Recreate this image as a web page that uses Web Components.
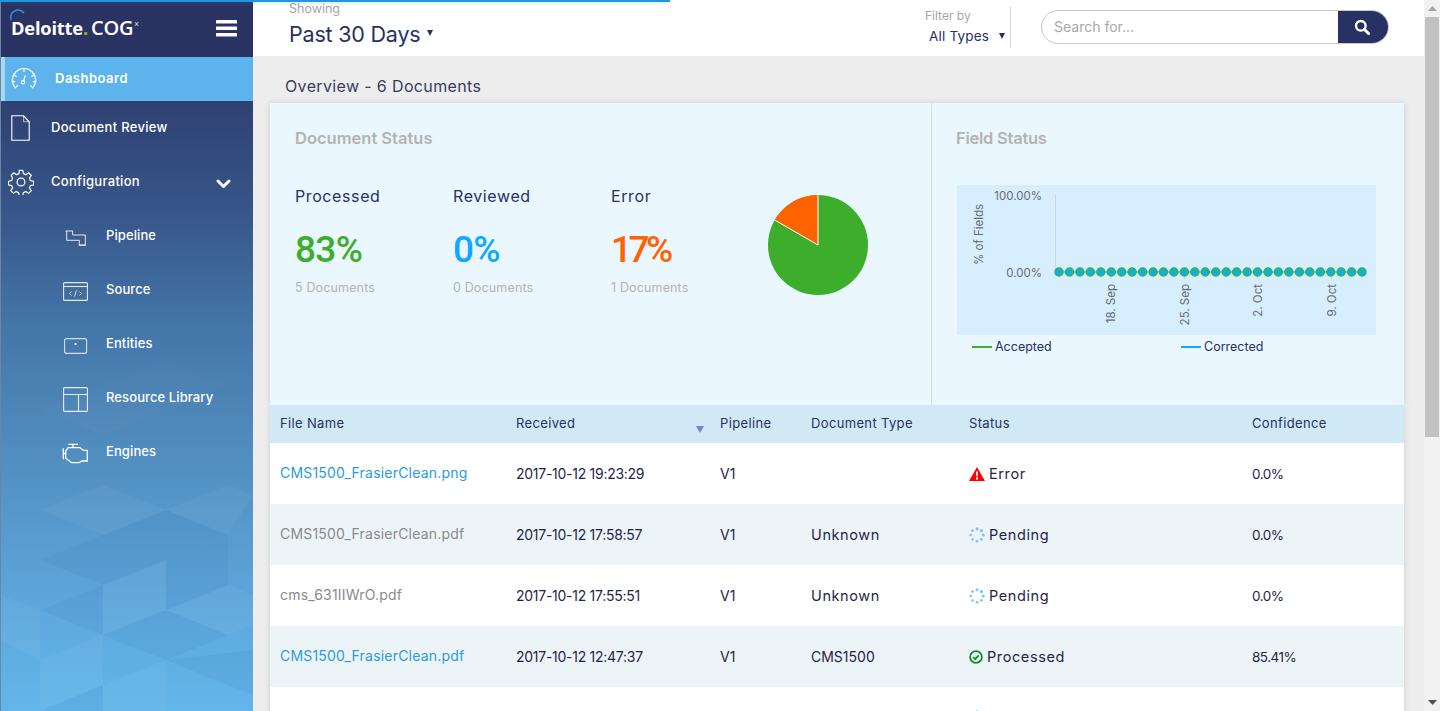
<!DOCTYPE html>
<html lang="en"><head><meta charset="utf-8"><title>Deloitte COGx</title>
<style>
html,body{margin:0;height:100%;overflow:hidden;background:#ededed}
body{font-family:Inter,"Noto Sans",sans-serif;color:#283163}
app-shell{height:711px}
</style></head><body>
<app-shell>
  <side-bar slot="side"></side-bar>
  <top-bar slot="top"></top-bar>
  <over-view slot="main"></over-view>
  <doc-table slot="main"></doc-table>
  <scroll-track slot="scroll"></scroll-track>
</app-shell>
<script>
const F='Inter,"Noto Sans",sans-serif';
function def(name,html,init){
  customElements.define(name,class extends HTMLElement{
    constructor(){super();this.attachShadow({mode:'open'}).innerHTML=typeof html==='function'?html(this):html;}
    connectedCallback(){if(init)init.call(this,this.shadowRoot);}
  });
}
def('app-shell',`<style>
:host{display:flex;position:relative;width:1440px;overflow:hidden}
.col{flex:1;min-width:0;display:flex;flex-direction:column;height:100%;overflow:hidden}
.body{flex:1;padding:0 20px 0 17px;display:flex;flex-direction:column;overflow:hidden}
.load{position:absolute;left:0;top:0;width:670px;height:2px;background:#2096e0;box-shadow:0 1px 4px rgba(32,150,224,.3);z-index:5}
</style><div class="load"></div><slot name="side"></slot><div class="col"><slot name="top"></slot><div class="body"><slot name="main"></slot></div></div><slot name="scroll"></slot>`);

const icons={
 dash:`<svg width="26" height="24" viewBox="0 0 28 26" fill="none" stroke="#fff" stroke-width="1.300" stroke-linecap="round"><path d="M4.500 22.500A12.600 12.600 0 1 1 23.500 22.500"/><path d="M14 2.500v2.400M3.600 9l2 1.200M24.400 9l-2 1.200M1.600 16h2.400M24 16h2.400M5.500 21.500l1.600-1.200M22.500 21.500l-1.600-1.200"/><circle cx="13" cy="16.500" r="1.800"/><path d="M13.600 15l1.600-5.500"/></svg>`,
 doc:`<svg width="19" height="26" viewBox="0 0 19 26" fill="none" stroke="#fff" stroke-width="1.100"><path d="M.8.8h11.800l5.600 6v18.400H.8z"/><path d="M12.600 .8v6h5.600" stroke-opacity=".6"/></svg>`,
 gear:`<svg width="26" height="26" viewBox="0 0 24 24" fill="none" stroke="#fff" stroke-width="1.100" stroke-linejoin="round"><circle cx="12" cy="12" r="3.600"/><path d="M10.300 1.300h3.400l.5 3a7.600 7.600 0 0 1 2.300 1l2.500-1.800 2.500 2.500-1.800 2.500a7.600 7.600 0 0 1 1 2.300l3 .5v3.400l-3 .5a7.600 7.600 0 0 1-1 2.300l1.800 2.500-2.500 2.500-2.500-1.800a7.600 7.600 0 0 1-2.300 1l-.5 3h-3.400l-.5-3a7.600 7.600 0 0 1-2.300-1l-2.500 1.800-2.500-2.500 1.800-2.500a7.600 7.600 0 0 1-1-2.300l-3-.5v-3.400l3-.5a7.600 7.600 0 0 1 1-2.300L2.900 6l2.500-2.500 2.500 1.800a7.600 7.600 0 0 1 2.300-1z"/></svg>`,
 pipe:`<svg width="24" height="18" viewBox="0 0 24 18" fill="none" stroke="#fff" stroke-opacity=".85" stroke-width="1"><path d="M2.700 2v9.300h12.600V16h6V6H8.700V2"/><path d="M1.500 2h7.500M14.800 16.300h7" stroke-width="1.100"/></svg>`,
 src:`<svg width="25" height="19" viewBox="0 0 25 19" fill="none" stroke="#fff" stroke-opacity=".85" stroke-width="1.100"><rect x=".6" y=".6" width="23.800" height="17.800" rx="1"/><path d="M.6 4.500h23.800"/><path d="M8.500 9.500l-2 2 2 2M16.500 9.500l2 2-2 2M13.500 8.500l-2 6" stroke-width=".9"/></svg>`,
 ent:`<svg width="24" height="16" viewBox="0 0 24 16" fill="none" stroke="#fff" stroke-opacity=".75" stroke-width="1.100"><rect x=".6" y=".6" width="22" height="14.800" rx="2"/><circle cx="11.600" cy="6" r="1.100" fill="#fff" stroke="none"/></svg>`,
 lib:`<svg width="25" height="25" viewBox="0 0 25 25" fill="none" stroke="#fff" stroke-opacity=".85" stroke-width="1.100"><rect x=".6" y=".6" width="23.800" height="23.800" rx="1"/><path d="M.6 7.500h23.800M15.500 7.500v16.900"/></svg>`,
 eng:`<svg width="27" height="21" viewBox="0 0 27 21" fill="none" stroke="#fff" stroke-width="1.300" stroke-linejoin="round"><path d="M1.300 5.300v11M1.300 10.500h2.400"/><path d="M6.300 4.700H18l3.300 2.600h4V18h-5.600L17 19.700H9.700L3.700 15.300V8z"/><path d="M6.300 1.300H16M11 1.300v3.400"/></svg>`,
 chev:`<svg width="15" height="10" viewBox="0 0 15 10" fill="none" stroke="#fff" stroke-width="3" stroke-linecap="round" stroke-linejoin="round"><path d="M2 2l5.500 5.500L13 2"/></svg>`
};

def('nav-item',h=>{
 const sub=h.hasAttribute('sub'),act=h.hasAttribute('active');
 return `<style>
 :host{display:flex;align-items:center;height:${act?44:54}px;position:relative;font:500 13px ${F};color:#fff;letter-spacing:${sub?.1:act?.5:.3}px;${act?'background:#5db3ec;border-left:4px solid #a8d8f0;box-sizing:border-box;font-weight:600;':''}}
 .ic{width:${sub?105:50}px;padding-left:${sub?h.getAttribute('ix')||64:act?6:h.getAttribute('ix')||8}px;box-sizing:border-box;display:flex;align-items:center;flex:none;${sub?'margin-top:3px;':''}}
 .ic svg{display:block}
 .t{white-space:nowrap;margin-top:-2px}
 .c{position:absolute;left:215px;top:21px}
 </style><span class="ic">${icons[h.getAttribute('icon')]}</span><span class="t"><slot></slot></span>${h.hasAttribute('open')?`<span class="c">${icons.chev}</span>`:''}`;
});

def('side-bar',`<style>
:host{display:block;width:253px;flex:none;height:711px;position:relative;overflow:hidden;background:linear-gradient(180deg,#2a3363 0,#2e3f70 13%,#38568a 30%,#4476a8 46%,#5390c2 66%,#5ea8dc 86%,#63b6ea 100%);border-left:1px solid #6e83a8;box-sizing:border-box}
.pat{position:absolute;left:-1px;top:0}
.logo{height:57px;display:flex;align-items:center;justify-content:space-between;padding:0 16px 0 10px;background:#2b3363;position:relative;color:#fff}
.brand{display:flex;align-items:baseline;white-space:nowrap;font:700 18.300px "Open Sans",sans-serif;letter-spacing:-.2px;margin-top:-2px}
.brand i{font-style:normal;color:#86bc25}
.brand b{font-weight:600;font-size:20px;margin-left:3px;letter-spacing:-.1px}
.brand sup{font-size:8px;font-weight:400;align-self:flex-start;margin:0 0 0 1px;line-height:18px;color:#dfe3ee}
.arc{position:absolute;left:9px;top:9px}
.burger{display:block}
</style>
<svg class="pat" width="253" height="711" viewBox="0 0 253 711" fill="#fff">
 <g fill="#2f6ca8" opacity=".09"><polygon points="40,560 103,535 166,510 228,535 166,560 103,585"/><polygon points="166,560 228,535 228,585 166,610"/><polygon points="103,635 166,610 228,635 166,660 "/><polygon points="40,610 103,585 103,635"/><polygon points="103,685 103,711 40,711"/><polygon points="166,660 228,685 253,675 253,650"/><polygon points="228,685 253,675 253,695"/></g>
 <g opacity=".035"><polygon points="103,585 166,560 166,610 103,635"/><polygon points="40,660 103,635 103,685 40,711"/><polygon points="103,685 166,660 166,711 103,711"/><polygon points="228,585 253,595 253,625 228,635"/><polygon points="40,510 103,485 166,510 103,535"/><polygon points="166,610 228,585 228,635"/><polygon points="0,595 40,610 40,660 0,640"/><polygon points="166,510 228,485 253,495 228,535"/></g>
 <g opacity=".018"><polygon points="40,410 103,385 166,360 228,385 166,410 103,435 "/></g>
</svg>
<div class="logo"><div class="brand">Deloitte<i>.</i><b>COG</b><sup>x</sup></div>
 <svg class="arc" width="16" height="14" viewBox="0 0 16 14" fill="none" stroke="#2c8fd8" stroke-width="1.800"><path d="M1 11A7.500 7.500 0 0 1 14 4"/></svg>
 <svg class="burger" width="21" height="17" viewBox="0 0 21 17" fill="#fff"><rect width="21" height="3.500" rx=".6"/><rect y="6.500" width="21" height="3.500" rx=".6"/><rect y="13" width="21" height="3.500" rx=".6"/></svg>
</div>
<div class="groups">
<nav-item icon="dash" active>Dashboard</nav-item>
<nav-item icon="doc" ix="10">Document Review</nav-item>
<nav-item icon="gear" ix="7" open>Configuration</nav-item>
<nav-item icon="pipe" sub ix="63">Pipeline</nav-item>
<nav-item icon="src" sub ix="62">Source</nav-item>
<nav-item icon="ent" sub ix="63">Entities</nav-item>
<nav-item icon="lib" sub ix="62">Resource Library</nav-item>
<nav-item icon="eng" sub ix="61">Engines</nav-item>
</div>`);

const caret=(w,h,c)=>`display:inline-block;width:0;height:0;border-left:${w}px solid transparent;border-right:${w}px solid transparent;border-top:${h}px solid ${c}`;
def('top-bar',`<style>
:host{display:flex;height:56px;background:#fff;flex:none;position:relative;font-family:${F};align-items:stretch}
.show{margin-left:36px;display:flex;flex-direction:column;width:636px;flex:none}
.lbl{font-size:12.500px;color:#a5a5a5;line-height:16px;margin-top:1px}
.val{font-size:21.500px;line-height:30px;margin-top:2px;color:#283163;white-space:nowrap;letter-spacing:-.2px;display:flex;align-items:center}
.val i{${caret(3,6,'#283163')};margin-left:7px;margin-top:-2px}
.filter{width:85px;flex:none;border-right:1px solid #d4d4d4;margin:7px 0 8px;position:relative}
.filter .l{font-size:12px;color:#a5a5a5;line-height:16px;margin-top:1px}
.filter .v{font-size:13.500px;line-height:18px;margin:3px 0 0 4px;color:#283163;white-space:nowrap;letter-spacing:.2px;display:flex;align-items:center}
.filter .v i{${caret(3,6,'#283163')};margin-left:10px}
.search{margin:10px 0 0 30px;width:348px;height:34px;box-sizing:border-box;border:1px solid #c9c9c9;border-radius:17px;display:flex;position:relative;overflow:hidden}
.search .ph{flex:1;font-size:14px;color:#a8a8a8;line-height:32px;padding-left:12px}
.search .btn{width:51px;margin:-1px;background:#283163;display:flex;align-items:center;justify-content:center;padding-right:4px;box-sizing:border-box}
</style>
<div class="show"><div class="lbl">Showing</div><div class="val">Past 30 Days<i></i></div></div>
<div class="filter"><div class="l">Filter by</div><div class="v">All Types<i></i></div></div>
<div class="search"><div class="ph">Search for...</div><div class="btn"><svg width="16" height="16" viewBox="0 0 16 16" fill="none" stroke="#fff"><circle cx="6.800" cy="6.800" r="4.800" stroke-width="2.400"/><path d="M10.500 10.500L14.500 14.500" stroke-width="3" stroke-linecap="round"/></svg></div></div>`);

def('stat-block',h=>`<style>
:host{display:block;width:158px;font-family:${F}}
.a{font-size:16px;line-height:20px;color:#283163;letter-spacing:.6px}
.b{font:500 37px/40px Roboto,sans-serif;margin-top:24px;color:${h.getAttribute('color')};letter-spacing:${h.getAttribute('ls')||'-.7'}px}
.c{font-size:12.500px;line-height:16px;margin-top:10px;color:#b4b4b4;white-space:nowrap;letter-spacing:.15px}
</style><div class="a">${h.getAttribute('label')}</div><div class="b">${h.getAttribute('pct')}</div><div class="c">${h.getAttribute('docs')}</div>`);

let dots='';for(let i=0;i<30;i++){const x=102+i*10.45;dots+=`<circle cx="${x.toFixed(1)}" cy="87" r="4.100" fill="#10b0dc" stroke="#3dae2b" stroke-width="1.100"/>`;}
const ticks=[[153,'18. Sep'],[227,'25. Sep'],[300,'2. Oct'],[374,'9. Oct']];
let tk=ticks.map(([x,t])=>`<path d="M${x+.5} 88v6" stroke="#c9d6df"/><text transform="translate(${x+5} 99) rotate(-90)" text-anchor="end" class="t">${t}</text>`).join('');

def('over-view',`<style>
:host{display:block;font-family:${F};flex:none}
.h{font-size:16px;line-height:20px;padding:20px 0 0 15px;height:27px;color:#373d5e;letter-spacing:.36px}
.card{display:flex;height:302px;background:#eaf7ff;box-shadow:0 0 6px rgba(0,0,0,.14);clip-path:inset(-10px -10px 0 -10px)}
.l{width:662px;flex:none;border-right:1px solid #d5dde3;padding:0 0 0 25px;box-sizing:border-box}
.r{flex:1;padding:0 0 0 24px}
h3{margin:0;font-size:16.500px;font-weight:600;color:#b3b3b3;line-height:20px;padding-top:25px;white-space:nowrap}
.r h3{letter-spacing:-.25px}
.stats{display:flex;align-items:flex-start;margin-top:38px;position:relative}
.pie{position:absolute;left:473px;top:9px}
.chart{margin:37px 0 0 1px;width:419px;height:150px;background:#d6eefd;display:block}
.t{font:400 11.500px ${F};fill:#666c75}
.leg{display:flex;margin:4px 0 0 16px;font-size:12.500px;line-height:16px;color:#283163}
.leg span{display:flex;align-items:center;width:209px;white-space:nowrap}
.leg i{display:block;width:20px;height:2px;margin-right:3px}
</style>
<div class="h">Overview - 6 Documents</div>
<div class="card"><div class="l"><h3>Document Status</h3><div class="stats">
<stat-block label="Processed" pct="83%" docs="5 Documents" color="#3dae2b"></stat-block>
<stat-block label="Reviewed" pct="0%" docs="0 Documents" color="#0fa9ff"></stat-block>
<stat-block label="Error" pct="17%" docs="1 Documents" color="#ff6200" ls="-3.500"></stat-block>
<svg class="pie" width="100" height="100" viewBox="0 0 100 100"><circle cx="50" cy="50" r="50" fill="#3dae2b"/><path d="M50 50V0A50 50 0 0 0 6.700 25z" fill="#ff6200"/><path d="M50 0V50L6.700 25" fill="none" stroke="#fff" stroke-width="1"/></svg>
</div></div>
<div class="r"><h3>Field Status</h3>
<svg class="chart" width="419" height="150" viewBox="0 0 419 150">
<path d="M98.500 10V87" stroke="#c9d6df"/><path d="M98 87H405" stroke="#12b0d8" stroke-width="1"/>
<text class="t" x="85" y="15" text-anchor="end">100.00%</text><text class="t" x="85" y="92" text-anchor="end">0.00%</text>
<text class="t" transform="translate(26 80) rotate(-90)">% of Fields</text>
${tk}${dots}</svg>
<div class="leg"><span><i style="background:#3dae2b"></i>Accepted</span><span><i style="background:#0fa9ff"></i>Corrected</span></div>
</div></div>`);

const spin=`<svg width="16" height="16" viewBox="0 0 16 16" fill="#7cc4f2">${[0,45,90,135,180,225,270,315].map((a,i)=>{const r=a*Math.PI/180;const x=8+6.300*Math.sin(r),y=8-6.300*Math.cos(r);const rr=[1.500,1.600,1.500,1.400,1.300,1.300,1.300,1.400][i];return `<circle cx="${x.toFixed(2)}" cy="${y.toFixed(2)}" r="${rr}"/>`;}).join('')}</svg>`;
const st={
 Error:`<svg width="16" height="14" viewBox="0 0 16 14"><path d="M8 0L16 14H0z" fill="#f00"/><path d="M7 4.500h2l-.3 5h-1.400zM7 10.500h2v2H7z" fill="#fff"/></svg>`,
 Pending:spin,
 Processed:`<svg width="14" height="14" viewBox="0 0 14 14" fill="none"><circle cx="7" cy="7" r="5.900" stroke="#0a8a2a" stroke-width="1.800"/><path d="M4.200 7.200l2 2 3.600-3.800" stroke="#0a8a2a" stroke-width="1.800"/></svg>`
};
def('status-cell',h=>{const s=h.getAttribute('s');const t=h.getAttribute('t');return `<style>:host{display:flex;align-items:center;gap:4px;font-size:14.500px;letter-spacing:.6px}svg{display:block;flex:none}</style>${st[s]}${t===''?'':`<span>${s}</span>`}`;});

def('doc-row',h=>{
 const alt=h.hasAttribute('alt');const link=h.hasAttribute('link');
 const ty=h.getAttribute('type')||'';
 return `<style>
 :host{display:grid;grid-template-columns:var(--cols);height:61px;align-items:center;background:${alt?'#edf4f8':'#fff'};font:400 14px ${F};color:#1f2547;flex:none}
 .f{padding-left:10px;color:${link?'#2b9bdd':'#8a8a8a'};font-size:14px;letter-spacing:.2px;white-space:nowrap;margin-top:-2px}
 .d{white-space:nowrap;letter-spacing:-.27px}
 .t{${/\d/.test(ty)?'':'font-size:14.500px;letter-spacing:.6px;'}}
 .p{font-size:13.500px;letter-spacing:-.5px}
 </style><div class="f">${h.getAttribute('file')||''}</div><div class="d">${h.getAttribute('date')||''}</div><div>${h.getAttribute('pipe')||''}</div><div class="t">${ty}</div><div class="s"><slot></slot></div><div class="p">${h.getAttribute('conf')||''}</div>`;
});

def('doc-table',`<style>
:host{display:block;flex:none;--cols:246px 204px 91px 158px 283px 1fr;box-shadow:0 0 6px rgba(0,0,0,.14);clip-path:inset(0 -10px -10px -10px);font-family:${F}}
.head{display:grid;grid-template-columns:var(--cols);height:38px;align-items:center;background:#d0e9f5;font-size:13px;color:#283163;position:relative;letter-spacing:.35px}
.head div{margin-top:-2px}
.head div:first-child{padding-left:10px}
.arr{position:absolute;left:426px;top:21px;width:0;height:0;border:4px solid transparent;border-top:7px solid #7a7fdc;border-bottom:0}
</style>
<div class="head"><div>File Name</div><div>Received</div><div>Pipeline</div><div>Document Type</div><div>Status</div><div>Confidence</div><span class="arr"></span></div>
<doc-row link file="CMS1500_FrasierClean.png" date="2017-10-12 19:23:29" pipe="V1" conf="0.0%"><status-cell s="Error"></status-cell></doc-row>
<doc-row alt file="CMS1500_FrasierClean.pdf" date="2017-10-12 17:58:57" pipe="V1" type="Unknown" conf="0.0%"><status-cell s="Pending"></status-cell></doc-row>
<doc-row file="cms_631IIWrO.pdf" date="2017-10-12 17:55:51" pipe="V1" type="Unknown" conf="0.0%"><status-cell s="Pending"></status-cell></doc-row>
<doc-row alt link file="CMS1500_FrasierClean.pdf" date="2017-10-12 12:47:37" pipe="V1" type="CMS1500" conf="85.41%"><status-cell s="Processed"></status-cell></doc-row>
<doc-row><status-cell s="Pending" t=""></status-cell></doc-row>`);

def('scroll-track',`<style>
:host{display:flex;flex-direction:column;width:16px;flex:none;background:#f1f1f1;height:711px}
.up{height:17px;display:flex;align-items:center;justify-content:center}
.thumb{height:420px;background:#c1c1c1;margin:0 1px 0 1px}
.sp{flex:1}
.dn{height:17px;display:flex;align-items:center;justify-content:center}
</style>
<div class="up"><svg width="9" height="5" viewBox="0 0 9 5"><path d="M4.500 0L9 5H0z" fill="#a3a3a3"/></svg></div><div class="thumb"></div><div class="sp"></div><div class="dn"><svg width="9" height="5" viewBox="0 0 9 5"><path d="M4.500 5L9 0H0z" fill="#505050"/></svg></div>`);
</script>
</body></html>
